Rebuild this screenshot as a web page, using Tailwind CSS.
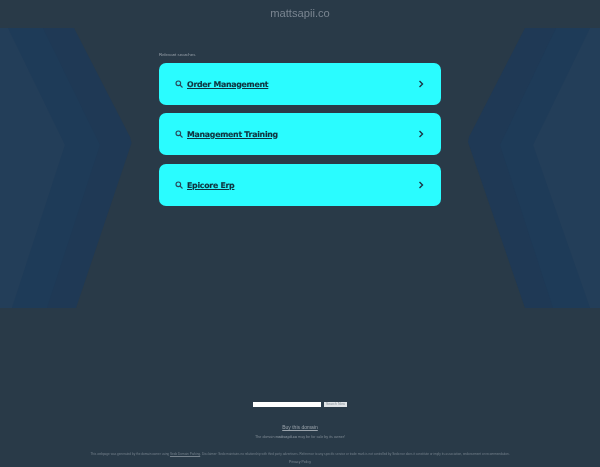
<!DOCTYPE html>
<html lang="en">
<head>
  <meta charset="UTF-8" />
  <meta name="viewport" content="width=device-width, initial-scale=1.0" />
  <title>mattsapii.co</title>
  <script src="https://cdn.jsdelivr.net/npm/@tailwindcss/browser@4"></script>
</head>
<body class="bg-[#293a48] font-['Liberation_Sans',sans-serif] overflow-hidden">
  <div class="relative h-[467px] w-[600px] overflow-hidden bg-[#293a48] blur-[0.4px]">
    <!-- side chevrons -->
    <svg class="absolute left-0 top-0" width="600" height="467" viewBox="0 0 600 467">
      <polygon points="0,28 74,28 130,137 131.500,143 76,308 0,308" fill="#1f3955" />
      <polygon points="0,28 43,28 100,145 47,308 0,308" fill="#1e3b58" />
      <polygon points="0,28 8,28 65,145 12,308 0,308" fill="#233e59" />
      <polygon points="600,28 525,28 469,137 468,142 525,308 600,308" fill="#1f3955" />
      <polygon points="600,28 556,28 500,145 553,308 600,308" fill="#1e3b58" />
      <polygon points="600,28 590,28 533,145 590,308 600,308" fill="#233e59" />
    </svg>

    <div class="relative flex h-full flex-col items-center">
      <div class="h-[27px] pt-[6px] text-[11.200px] leading-[14px] text-[#7a8591]">mattsapii.co</div>

      <div class="mt-[24px] w-[282px]">
        <div class="h-[12px] pt-[1px] text-[4.400px] leading-[6px] text-[#98a1aa]">Relevant searches</div>
        <div class="flex flex-col">
          <a class="flex h-[42px] items-center justify-between rounded-[7px] bg-[#2afcff] px-[16px] text-[#10333f]" href="#">
            <span class="flex items-center gap-[4px]">
              <svg width="8" height="8" viewBox="0 0 24 24" fill="none" stroke="#2b4a5c" stroke-width="3.4"><circle cx="10" cy="10" r="7"/><path d="M15 15l7.500 7.500"/></svg>
              <span class="pt-[1px] font-['DejaVu_Sans',sans-serif] text-[7.800px] font-bold leading-none tracking-[-0.25px] underline [-webkit-text-stroke:0.15px_#10333f]">Order Management</span>
            </span>
            <svg width="8" height="8" viewBox="0 0 8 8" fill="none" stroke="#1b3545" stroke-width="1.400"><path d="M2.500 1l3 3-3 3"/></svg>
          </a>
          <a class="mt-[8px] flex h-[42px] items-center justify-between rounded-[7px] bg-[#2afcff] px-[16px] text-[#10333f]" href="#">
            <span class="flex items-center gap-[4px]">
              <svg width="8" height="8" viewBox="0 0 24 24" fill="none" stroke="#2b4a5c" stroke-width="3.4"><circle cx="10" cy="10" r="7"/><path d="M15 15l7.500 7.500"/></svg>
              <span class="pt-[1px] font-['DejaVu_Sans',sans-serif] text-[7.800px] font-bold leading-none tracking-[-0.25px] underline [-webkit-text-stroke:0.15px_#10333f]">Management Training</span>
            </span>
            <svg width="8" height="8" viewBox="0 0 8 8" fill="none" stroke="#1b3545" stroke-width="1.400"><path d="M2.500 1l3 3-3 3"/></svg>
          </a>
          <a class="mt-[9px] flex h-[42px] items-center justify-between rounded-[7px] bg-[#2afcff] px-[16px] text-[#10333f]" href="#">
            <span class="flex items-center gap-[4px]">
              <svg width="8" height="8" viewBox="0 0 24 24" fill="none" stroke="#2b4a5c" stroke-width="3.4"><circle cx="10" cy="10" r="7"/><path d="M15 15l7.500 7.500"/></svg>
              <span class="pt-[1px] font-['DejaVu_Sans',sans-serif] text-[7.800px] font-bold leading-none tracking-[-0.25px] underline [-webkit-text-stroke:0.15px_#10333f]">Epicore Erp</span>
            </span>
            <svg width="8" height="8" viewBox="0 0 8 8" fill="none" stroke="#1b3545" stroke-width="1.400"><path d="M2.500 1l3 3-3 3"/></svg>
          </a>
        </div>
      </div>

      <div class="mt-auto flex items-center gap-[3px]">
        <div class="h-[5.500px] w-[68px] bg-white"></div>
        <div class="flex h-[5.500px] w-[23px] items-center justify-center bg-[#e0e4e7] text-[3.500px] leading-none text-[#87919a]">Search Now</div>
      </div>

      <div class="mt-[17px] text-[5px] leading-[6px] text-[#9aa3ab] underline">Buy this domain</div>
      <div class="mt-[4.500px] text-[3.700px] leading-[4px] text-[#7f8a94]">The domain <b>mattsapii.co</b> may be for sale by its owner!</div>
      <div class="mt-[13.500px] whitespace-nowrap text-[3.125px] leading-[4px] text-[#75818c]">This webpage was generated by the domain owner using <span class="underline">Sedo Domain Parking</span>. Disclaimer: Sedo maintains no relationship with third party advertisers. Reference to any specific service or trade mark is not controlled by Sedo nor does it constitute or imply its association, endorsement or recommendation.</div>
      <div class="mb-[3px] mt-[4px] text-[3.500px] leading-[4px] text-[#7f8a94]">Privacy Policy</div>
    </div>
  </div>
</body>
</html>
